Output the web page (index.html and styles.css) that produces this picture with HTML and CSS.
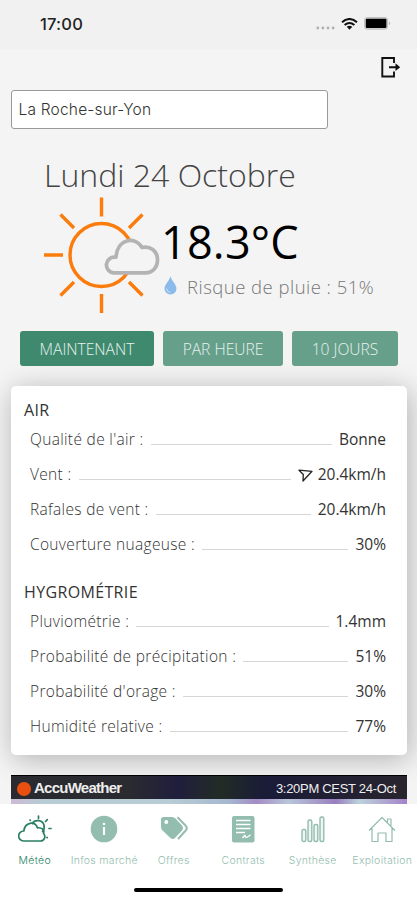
FILE: index.html
```html
<!DOCTYPE html>
<html lang="fr">
<head>
<meta charset="utf-8">
<title>Météo</title>
<link rel="stylesheet" href="styles.css">
</head>
<body>
<div class="app">
  <header class="status">
    <span class="clock">17:00</span>
    <div class="signals">
      <svg class="cell" width="19" height="4" viewBox="0 0 19 4" fill="#b0b0b0"><circle cx="1.8" cy="2" r="1.4"/><circle cx="6.9" cy="2" r="1.4"/><circle cx="12" cy="2" r="1.4"/><circle cx="17.1" cy="2" r="1.4"/></svg>
      <svg class="wifi" width="17" height="12" viewBox="0 0 17 12" fill="none" stroke="#111" stroke-width="2"><path d="M1 4.3Q8.5-2.3 16 4.3M3.6 7.1Q8.5 2.9 13.4 7.1"/><path d="M5.7 8.8Q8.500 6.600 11.300 8.800L8.500 11.800Z" fill="#111" stroke="none"/></svg>
      <svg class="battery" width="27" height="13" viewBox="0 0 27 13"><rect x=".6" y=".6" width="23" height="11.600" rx="2.500" fill="#d5d5d5" stroke="#bdbdbd"/><rect x="1.800" y="1.800" width="20.600" height="9.200" rx="1" fill="#000"/><path d="M25 4.500Q27 6.400 25 8.300Z" fill="#aaa"/></svg>
    </div>
  </header>

  <main class="content">
    <div class="toolbar">
      <svg width="20" height="21" viewBox="0 0 20 21" fill="none" stroke="#111" stroke-width="1.900"><path d="M13 6V1H1.300v18.500H13V14.500M8 10.200h9"/><path d="M14.500 6.300l4.700 3.900-4.700 3.900z" fill="#111" stroke="none"/></svg>
    </div>
    <div class="city"><span>La Roche-sur-Yon</span></div>
    <h1><span class="t-day">Lundi 24 Octobre</span></h1>
    <section class="now">
      <svg class="sun" width="118" height="118" viewBox="0 0 118 118" fill="none" stroke-linecap="round" stroke-linejoin="round">
        <g stroke="#fb7c0c" stroke-width="3.400"><circle cx="58.500" cy="58" r="31.500"/><path stroke-linecap="butt" d="M58.500 0.500v19M58.500 97v19M1 58h19M17.500 17.500L31 31M99.500 17.500L86 31M17.500 98.500L31 85M99.500 98.500L86 85"/></g>
        <path d="M70.500 75.800a7.800 7.800 0 0 1 1.500-15.600H73C74 42 92 38.500 99 50.500c8-2 15.500 3 15.500 12.500 0 7.500-5 12.800-12 12.800z" fill="#f4f4f4" stroke="#b3b3b3" stroke-width="3.700"/>
      </svg>
      <div class="reading">
        <div class="temp"><span>18.3°C</span></div>
        <div class="rain">
          <svg width="13" height="19" viewBox="0 0 13 19"><path d="M6.500 0C6 4 .5 8.500.5 12.500a6 6 0 0 0 12 0C12.500 8.500 7 4 6.500 0z" fill="#8bbbea"/><path d="M2.500 12.500q.5 3.500 3.700 4" fill="none" stroke="#cfe3f7" stroke-width="1"/></svg>
          <span>Risque de pluie : 51%</span>
        </div>
      </div>
    </section>
    <nav class="tabs">
      <div class="tab active"><span>MAINTENANT</span></div>
      <div class="tab hour"><span>PAR HEURE</span></div>
      <div class="tab days"><span>10 JOURS</span></div>
    </nav>
    <section class="card">
      <h2><span>AIR</span></h2>
      <div class="row"><span class="k">Qualité de l'air :</span><i></i><span class="v">Bonne</span></div>
      <div class="row"><span class="k">Vent :</span><i></i><svg class="dir" width="15" height="13" viewBox="0 0 15 13" fill="none" stroke="#222" stroke-width="1.300" stroke-linejoin="round"><path d="M1 1.200L14 2.300L5 12L5.300 5.500Z"/></svg><span class="v">20.4km/h</span></div>
      <div class="row"><span class="k">Rafales de vent :</span><i></i><span class="v">20.4km/h</span></div>
      <div class="row"><span class="k">Couverture nuageuse :</span><i></i><span class="v">30%</span></div>
      <h2 class="second"><span>HYGROMÉTRIE</span></h2>
      <div class="row"><span class="k">Pluviométrie :</span><i></i><span class="v">1.4mm</span></div>
      <div class="row"><span class="k">Probabilité de précipitation :</span><i></i><span class="v">51%</span></div>
      <div class="row"><span class="k">Probabilité d'orage :</span><i></i><span class="v">30%</span></div>
      <div class="row"><span class="k">Humidité relative :</span><i></i><span class="v">77%</span></div>
    </section>
    <section class="radar">
      <div class="radar-bar"><b class="dot"></b><span class="brand">AccuWeather</span><span class="stamp">3:20PM CEST 24-Oct</span></div>
      <div class="radar-map"></div>
    </section>
  </main>

  <footer class="bottom">
    <div class="item on">
      <svg width="34" height="28" viewBox="0 0 34 28" fill="none" stroke="#287f61" stroke-width="1.700" stroke-linecap="round"><path d="M5.500 26a5 5 0 0 1 .3-10C7 6.500 17 6 19.500 12.800c4.500-.5 7.300 2.300 6 5.400 2.800 3.600.8 7.800-3 7.800z"/><path d="M14.500 8.500c2-4 10-4 11.500 1.700.6 2.700-.2 5-1.500 6.300M20.500 1v2.500M29.300 4.700l-1.800 1.800M31 13.500h2M29 22.300l.3.300M12 5l.3.300"/></svg>
      <span>Météo</span>
    </div>
    <div class="item">
      <svg width="28" height="28" viewBox="0 0 28 28"><circle cx="14" cy="14" r="13.300" fill="#93bdae"/><path d="M14 12v8" stroke="#fff" stroke-width="2.200"/><circle cx="14" cy="9" r="1.300" fill="#fff"/></svg>
      <span>Infos marché</span>
    </div>
    <div class="item">
      <svg width="28" height="28" viewBox="0 0 28 28"><path d="M1 4.500Q1 2 3.500 2H12Q14 2 15.500 3.500L22 10.500Q24 13 22 15.500L15 23Q13 25 10.500 23L2.500 15.500Q1 14 1 12Z" fill="#93bdae"/><circle cx="6.300" cy="7" r="1.900" fill="#fff"/><path d="M17.500 2.300L25.500 10.500Q28 13.200 25.500 15.800L18 24" fill="none" stroke="#93bdae" stroke-width="2"/></svg>
      <span>Offres</span>
    </div>
    <div class="item">
      <svg width="24" height="28" viewBox="0 0 24 28"><rect x="1" y="1" width="22.500" height="26.500" rx="2" fill="#93bdae"/><path d="M5 5.500h14.500M5 9.500h14.500M5 13.500h14.500M5 17.500h9M11.500 23q3-4 3-1.500t5-1.800" fill="none" stroke="#fff" stroke-width="1.300"/></svg>
      <span>Contrats</span>
    </div>
    <div class="item">
      <svg width="24" height="28" viewBox="0 0 24 28" fill="#eef5f2" stroke="#93bdae" stroke-width="1.400"><rect x="1" y="14.500" width="3.800" height="12" rx="1.500"/><rect x="7" y="5" width="3.800" height="21.500" rx="1.500"/><rect x="13" y="9.500" width="3.800" height="17" rx="1.500"/><rect x="19" y="2" width="3.800" height="24.500" rx="1.500"/></svg>
      <span>Synthèse</span>
    </div>
    <div class="item">
      <svg width="28" height="28" viewBox="0 0 28 28" fill="none" stroke="#93bdae" stroke-width="1.200" stroke-linejoin="round"><path d="M1 15.500L14 2.500L27 15.500M4 13v13.500h6v-8.500h8v8.500h6V13M19.500 7V4h3.500v6.500"/></svg>
      <span>Exploitation</span>
    </div>
  </footer>
  <div class="home"><div></div></div>
</div>
</body>
</html>
```
FILE: styles.css
```css
* { box-sizing: border-box; }
body { margin: 0; font-family: "Open Sans", sans-serif; background: #f4f4f4; }
svg { display: block; flex: none; }
.app { width: 417px; height: 900px; overflow: hidden; display: flex; flex-direction: column; background: #f4f4f4; }
.status { flex: none; height: 49px; background: #f1f1f1; display: flex; justify-content: space-between; padding: 0 26px 0 40px; }
.clock { font: 500 16.5px/49px Inter, sans-serif; color: #222; letter-spacing: .2px; }
.signals { display: flex; padding-top: 17px; }
.cell { margin: 9px 6px 0 0; }
.wifi { margin: 1px 6px 0 0; }
.content { height: 755px; flex: none; overflow: hidden; padding: 0 10px 0 11px; }
.toolbar { display: flex; justify-content: flex-end; height: 41px; padding: 8px 6px 0 0; }
.city { width: 317px; height: 39px; border: 1px solid #999; border-radius: 3px; background: #fff; padding-left: 6.5px; font: 300 15.5px/38px Inter, sans-serif; letter-spacing: .2px; color: #333; }
h1 { margin: 24px 0 0 33px; height: 45px; font-weight: 300; font-size: 32px; line-height: 43px; color: #444; white-space: nowrap; }
.now { display: flex; height: 133px; padding-left: 32px; }
.sun { margin-top: -1px; }
.reading { white-space: nowrap; }
.temp { height: 75px; padding-top: 13px; font-size: 45px; line-height: 62px; color: #000; letter-spacing: .2px; }
.rain { display: flex; gap: 10px; margin-left: 3px; align-items: center; height: 26px; font-weight: 300; font-size: 18.5px; letter-spacing: .48px; color: #777; }
.rain svg { margin-top: -2px; }
.tabs { display: flex; gap: 9px; height: 35px; margin-left: 9px; }
.tab { width: 134px; border-radius: 3px; background: #66a08b; color: #e8f2ee; font-weight: 300; font-size: 15.6px; line-height: 36px; text-align: center; white-space: nowrap; }
.tab.active { background: #3f8a6f; }
.tab.hour { width: 120px; }
.tab.days { width: 106px; }
.card { height: 369px; margin-top: 20px; background: #fff; border-radius: 5px; padding: 13px 21px 0 13px; box-shadow: 2px 4px 28px rgba(0,0,0,.28); }
h2 { margin: 0; font-weight: 400; font-size: 16px; line-height: 22px; height: 22px; letter-spacing: .35px; color: #333; }
h2.second { margin-top: 20px; }
.row { display: flex; height: 35px; padding-left: 6px; line-height: 37px; font-size: 15.5px; font-weight: 300; color: #333; white-space: nowrap; }
.row .k { letter-spacing: .33px; }
.row i { flex: 1; height: 1px; margin: 23px 7px 0 7px; background: #d6d6d6; }
.row .v { font-weight: 400; }
.dir { margin: 13px 5px 0 0; }
.radar { margin-top: 20px; }
.radar-bar { display: flex; align-items: center; height: 24px; border-top: 1px solid #000; background: linear-gradient(90deg,#292b30 0 30%,#201e3d 42%,#222c25 53%,#1a1b38 64%,#29252e); font-family: "Liberation Sans", sans-serif; color: #eee; padding: 2px 11px 0 6px; white-space: nowrap; }
.dot { width: 14px; height: 14px; border-radius: 50%; background: #e95010; }
.brand { margin: -2px 0 0 3px; font-weight: 700; font-size: 15px; letter-spacing: -.75px; }
.stamp { margin-left: auto; font-size: 13px; letter-spacing: -.3px; }
.radar-map { height: 6px; background: linear-gradient(90deg,#ceb9d5,#b7ccd3 8% 40%,#a6b8d0 55%,#a48bc5 62%,#b9c6da 70%,#987fbe 82%,#bcd2db 88%,#a581c9); }
.bottom { flex: none; height: 72px; background: #fff; display: flex; }
.item { width: 69.500px; display: flex; flex-direction: column; align-items: center; padding-top: 11px; font: 300 10.5px/16px Inter, sans-serif; color: #93bdae; white-space: nowrap; }
.item span { margin-top: 10px; letter-spacing: .3px; }
.item.on { color: #287f61; }
.home { flex: none; height: 24px; background: #fff; padding-top: 12px; }
.home div { width: 149px; height: 4px; margin-left: 134px; border-radius: 2px; background: #000; }
```
